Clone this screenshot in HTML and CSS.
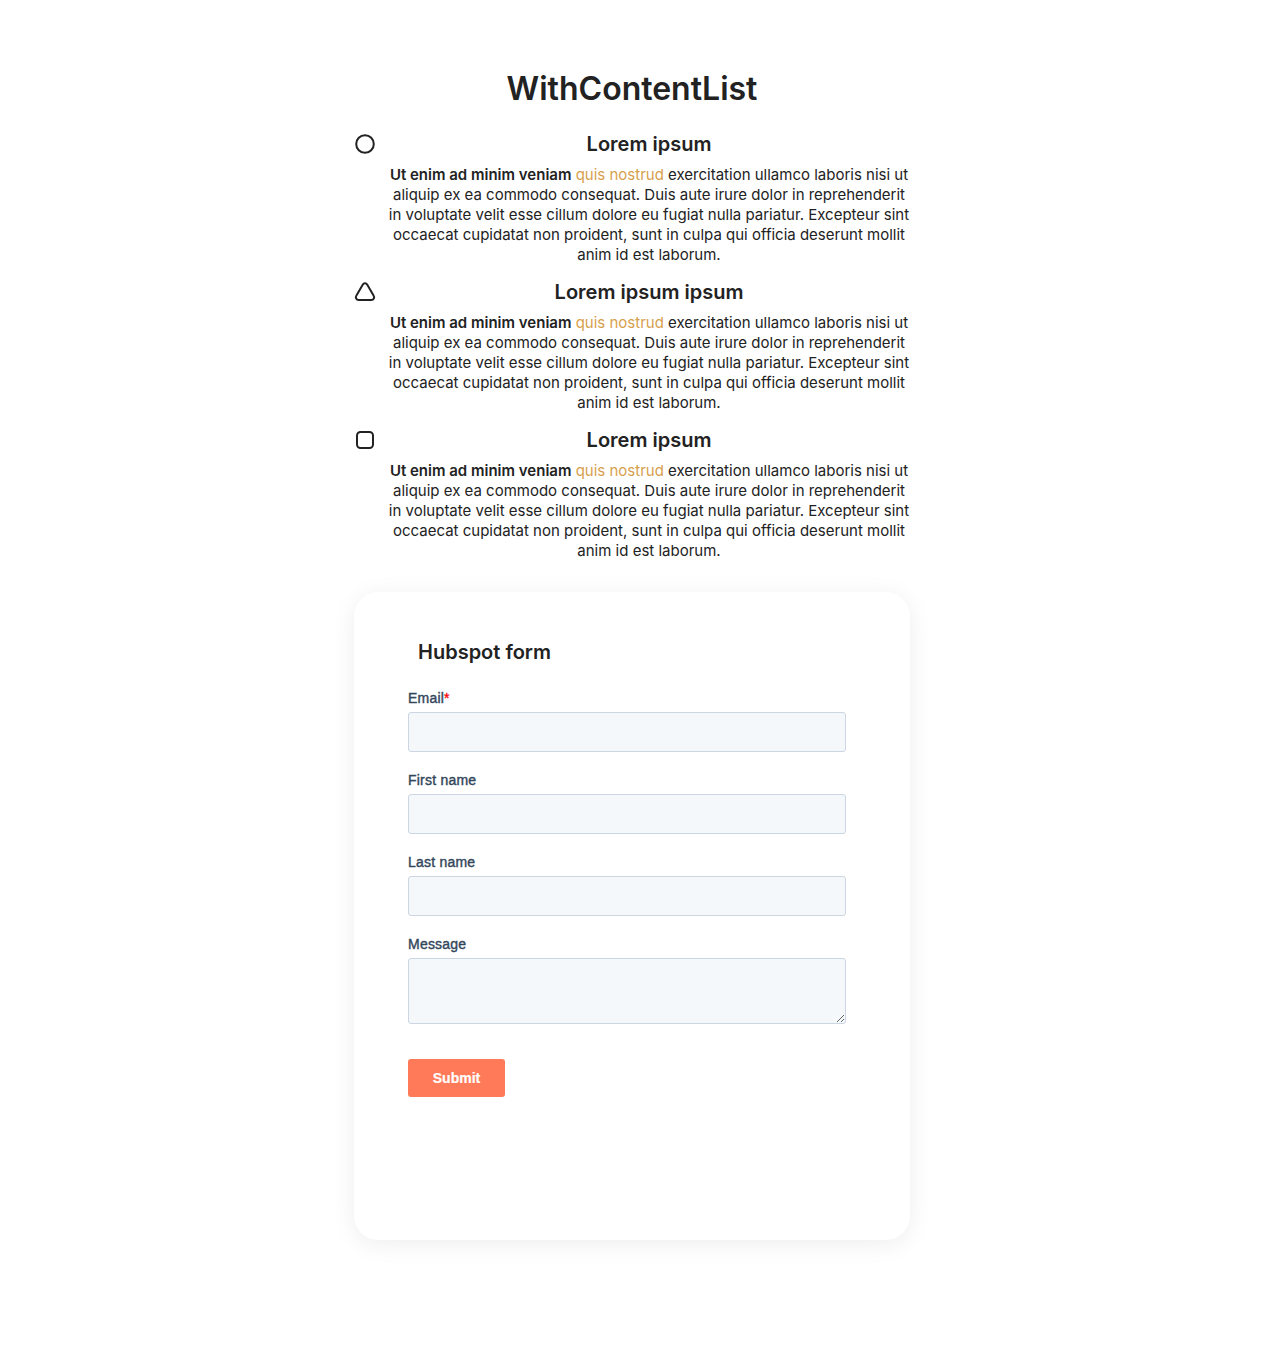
FILE: index.html
```html
<!DOCTYPE html>
<html lang="en">
<head>
<meta charset="utf-8">
<title>WithContentList</title>
<link rel="stylesheet" href="styles.css">
</head>
<body>
<main class="page">
  <h1 class="title">WithContentList</h1>
  <ul class="list">
    <li class="item">
      <svg class="icon" viewBox="0 0 22 22"><circle cx="11" cy="11" r="8.8"/></svg>
      <div class="content">
        <h2 class="heading">Lorem ipsum</h2>
        <p class="text"><strong>Ut enim ad minim veniam</strong> <a class="link">quis nostrud</a> exercitation ullamco laboris nisi ut aliquip ex ea commodo consequat. Duis aute irure dolor in reprehenderit in voluptate velit esse cillum dolore eu fugiat nulla pariatur. Excepteur sint occaecat cupidatat non proident, sunt in culpa qui officia deserunt mollit anim id est laborum.</p>
      </div>
    </li>
    <li class="item">
      <svg class="icon" viewBox="0 0 22 22"><path d="M8.7 3.7 2.3 14.8a2.7 2.7 0 0 0 2.3 4.2h12.8a2.7 2.7 0 0 0 2.3-4.2L13.3 3.7a2.65 2.65 0 0 0-4.6 0z"/></svg>
      <div class="content">
        <h2 class="heading">Lorem ipsum ipsum</h2>
        <p class="text"><strong>Ut enim ad minim veniam</strong> <a class="link">quis nostrud</a> exercitation ullamco laboris nisi ut aliquip ex ea commodo consequat. Duis aute irure dolor in reprehenderit in voluptate velit esse cillum dolore eu fugiat nulla pariatur. Excepteur sint occaecat cupidatat non proident, sunt in culpa qui officia deserunt mollit anim id est laborum.</p>
      </div>
    </li>
    <li class="item">
      <svg class="icon" viewBox="0 0 22 22"><rect x="3" y="3" width="16" height="16" rx="3.5"/></svg>
      <div class="content">
        <h2 class="heading">Lorem ipsum</h2>
        <p class="text"><strong>Ut enim ad minim veniam</strong> <a class="link">quis nostrud</a> exercitation ullamco laboris nisi ut aliquip ex ea commodo consequat. Duis aute irure dolor in reprehenderit in voluptate velit esse cillum dolore eu fugiat nulla pariatur. Excepteur sint occaecat cupidatat non proident, sunt in culpa qui officia deserunt mollit anim id est laborum.</p>
      </div>
    </li>
  </ul>
  <section class="card">
    <h2 class="card-title">Hubspot form</h2>
    <form class="form">
      <label class="field"><span class="label">Email<span class="required">*</span></span><input class="input" type="email"></label>
      <label class="field"><span class="label">First name</span><input class="input" type="text"></label>
      <label class="field"><span class="label">Last name</span><input class="input" type="text"></label>
      <label class="field"><span class="label">Message</span><textarea class="input area"></textarea></label>
      <button class="submit" type="button">Submit</button>
    </form>
  </section>
</main>
</body>
</html>
```
FILE: styles.css
```css
* { box-sizing: border-box; }
body { margin: 0; background: #fff; color: #222; font-family: Inter, sans-serif; }
.page { width: 556px; margin: 0 auto; padding: 69px 0 124px; }
.title { margin: 0; font-size: 32px; line-height: 40px; font-weight: 600; text-align: center; }
.list { list-style: none; margin: 23px 0 0; padding: 0; display: grid; gap: 16px; }
.item { display: flex; gap: 12px; height: 132px; }
.icon { flex: none; width: 22px; height: 22px; margin-top: 1px; fill: none; stroke: #222; stroke-width: 2; stroke-linejoin: round; }
.content { width: 522px; flex: none; text-align: center; }
.heading { margin: 0 0 9px; font-size: 20px; line-height: 24px; font-weight: 600; }
.text { margin: 0; font-size: 15px; line-height: 20px; }
.text strong { font-weight: 600; }
.link { color: #d7a04d; }
.card { margin-top: 32px; height: 648px; padding: 48px 64px 0 54px; border-radius: 24px; background: #fff; box-shadow: 0 4px 24px rgba(0, 0, 0, .07); }
.card-title { margin: 0 0 26px 10px; font-size: 20px; line-height: 24px; font-weight: 600; }
.form { font-family: "Liberation Sans", Arial, sans-serif; color: #33475b; }
.field { display: block; margin-bottom: 20px; }
.label { display: block; height: 22px; font-size: 14px; line-height: 16px; letter-spacing: .22px; -webkit-text-stroke: .4px; }
.required { color: #f00; letter-spacing: 0; -webkit-text-stroke: .3px; }
.input { display: block; width: 438px; height: 40px; border: 1px solid #cbd6e2; border-radius: 3px; background: #f5f8fa; outline: 0; }
.area { height: 66px; resize: vertical; }
.submit { display: block; margin-top: 35px; width: 97px; height: 38px; padding: 0; border: 0; border-radius: 3px; background: #ff7a59; color: #fff; font: 700 14px/14px "Liberation Sans", Arial, sans-serif; -webkit-text-stroke: .2px; }
```
